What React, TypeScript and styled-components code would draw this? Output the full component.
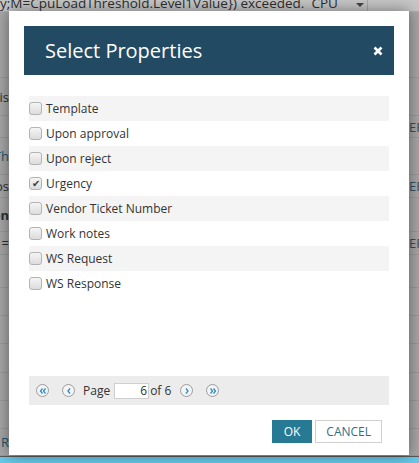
import React from "react";
import styled, { createGlobalStyle } from "styled-components";

const GlobalStyle = createGlobalStyle`
    html, body {
        margin: 0;
        padding: 0;
        background: #a7a7a7;
    }
    body {
        font-family: "Open Sans", "Liberation Sans", sans-serif;
    }
`;

const properties = [
    { label: "Template", checked: false },
    { label: "Upon approval", checked: false },
    { label: "Upon reject", checked: false },
    { label: "Urgency", checked: true },
    { label: "Vendor Ticket Number", checked: false },
    { label: "Work notes", checked: false },
    { label: "WS Request", checked: false },
    { label: "WS Response", checked: false },
];

const topLine = "y;M=CpuLoadThreshold.Level1Value}) exceeded.  CPU";

// rows of the dimmed page behind the dialog
const backRows: { h: number; left?: string; right?: string; tone?: "teal" | "bold" }[] = [
    { h: 66 },
    { h: 38, left: "nis" },
    { h: 22, right: "EF" },
    { h: 37, left: "Th", tone: "teal" },
    { h: 23, left: "os", right: "EF" },
    { h: 34, left: "on", tone: "bold" },
    { h: 23, left: "=", right: "EF" },
    { h: 33 },
    { h: 28 },
    { h: 28 },
    { h: 29 },
    { h: 28 },
    { h: 28 },
    { h: 27, left: "R", tone: "teal" },
];

const Stage = styled.div`
    position: relative;
    width: 419px;
    height: 463px;
    overflow: hidden;
    display: flex;
    flex-direction: column;
    background: #a7a7a7;
`;

const TopBar = styled.div`
    height: 11px;
    flex-shrink: 0;
    display: flex;
    background: #c7c7c7;
    border-bottom: 1px solid #b0b0b0;
    overflow: hidden;
`;

const TopText = styled.div`
    flex: 1;
    font-size: 13.5px;
    line-height: 14px;
    margin-top: -4px;
    color: #2e2e2e;
    white-space: pre;
    overflow: hidden;
`;

const DropButton = styled.div`
    width: 15px;
    display: flex;
    justify-content: center;
    padding-top: 3px;
    border-right: 1px solid #a9a9a9;
    margin-right: 51px;
    &::after {
        content: "";
        border-left: 4px solid transparent;
        border-right: 4px solid transparent;
        border-top: 4px solid #444;
        height: 0;
    }
`;

const BackRow = styled.div<{ $h: number }>`
    height: ${(p) => p.$h}px;
    flex-shrink: 0;
    display: flex;
    justify-content: space-between;
    align-items: center;
    border-bottom: 1px solid #9a9a9a;
    box-sizing: border-box;
    font-size: 13px;
    color: #2f2f2f;
`;

const BackLeft = styled.span<{ $tone?: string }>`
    width: 9px;
    overflow: hidden;
    white-space: nowrap;
    direction: rtl;
    font-weight: ${(p) => (p.$tone === "bold" ? 700 : 400)};
    color: ${(p) => (p.$tone === "teal" ? "#1d566b" : "#2f2f2f")};
`;

const BackRight = styled.span`
    width: 10px;
    overflow: hidden;
    white-space: nowrap;
    color: #2a5566;
`;

const Footer = styled.div`
    margin-top: auto;
    height: 8px;
    background: #66c9e8;
    border-top: 1px solid #5a5a5a;
`;

const Modal = styled.div`
    position: absolute;
    top: 11px;
    left: 9px;
    width: 400px;
    height: 444px;
    box-sizing: border-box;
    padding: 15px;
    background: #fff;
    box-shadow: 0 0 14px rgba(0, 0, 0, 0.45);
    display: flex;
    flex-direction: column;
`;

const Header = styled.div`
    height: 49px;
    flex-shrink: 0;
    background: #234a63;
    display: flex;
    align-items: center;
    justify-content: space-between;
    padding: 0 11px 0 21px;
`;

const Title = styled.h2`
    margin: 0;
    font-size: 20px;
    font-weight: 400;
    color: #fff;
`;

const CloseButton = styled.button`
    border: 0;
    padding: 0;
    background: none;
    display: flex;
    cursor: pointer;
`;

const Body = styled.div`
    padding: 21px 5px 0;
    display: flex;
    flex-direction: column;
`;

const PropertyList = styled.div`
    height: 280px;
`;

const PropertyRow = styled.label<{ $shade: boolean }>`
    height: 25px;
    display: flex;
    align-items: center;
    background: ${(p) => (p.$shade ? "#f4f4f4" : "#fff")};
    font-size: 12px;
    color: #333;
`;

const CheckBox = styled.span<{ $checked: boolean }>`
    width: 11px;
    height: 11px;
    margin: -1px 4px 0 0;
    border: 1px solid #b3b3b3;
    border-radius: 3px;
    background: linear-gradient(#f5f5f5, #dcdcdc);
    display: flex;
    align-items: center;
    justify-content: center;
    font-size: 10px;
    line-height: 1;
    color: #3a3a3a;
`;

const Pager = styled.div`
    height: 29px;
    background: #ececec;
    display: flex;
    align-items: center;
    padding-left: 7px;
    font-size: 12px;
    color: #333;
`;

const PageCircle = styled.span<{ $gap: number }>`
    width: 11px;
    height: 11px;
    margin-left: ${(p) => p.$gap}px;
    border: 1px solid #9c9c9c;
    border-radius: 50%;
    background: #f4f4f4;
    display: flex;
    align-items: center;
    justify-content: center;
`;

const PageLabel = styled.span<{ $gap: number }>`
    margin-left: ${(p) => p.$gap}px;
`;

const PageInput = styled.input`
    width: 35px;
    height: 16px;
    box-sizing: border-box;
    margin-left: 4px;
    margin-right: 1px;
    padding: 0 1px 0 0;
    border: 1px solid #cfcfcf;
    background: #fff;
    font: inherit;
    font-size: 12px;
    color: #333;
    text-align: right;
    outline: none;
`;

const Actions = styled.div`
    margin-top: 15px;
    display: flex;
    justify-content: flex-end;
    gap: 3px;
    padding-right: 7px;
`;

const Button = styled.button<{ $primary?: boolean }>`
    height: 23px;
    padding: 0 ${(p) => (p.$primary ? 11 : 10)}px;
    border: 1px solid ${(p) => (p.$primary ? "#277a93" : "#d0d0d0")};
    background: ${(p) => (p.$primary ? "#277a93" : "#fff")};
    color: ${(p) => (p.$primary ? "#fff" : "#2d6f88")};
    font-family: "Open Sans", "Liberation Sans", sans-serif;
    font-size: 12px;
    text-transform: uppercase;
    cursor: pointer;
`;

const Chevron = ({ dir, double }: { dir: "left" | "right"; double?: boolean }) => {
    const pts = (x: number) =>
        dir === "left" ? `${x + 2},1.5 ${x},4 ${x + 2},6.5` : `${x},1.5 ${x + 2},4 ${x},6.5`;
    return (
        <svg width="8" height="8" viewBox="0 0 8 8">
            {double ? (
                <>
                    <polyline points={pts(1.5)} fill="none" stroke="#2c8ec6" strokeWidth="1.3" />
                    <polyline points={pts(4.5)} fill="none" stroke="#2c8ec6" strokeWidth="1.3" />
                </>
            ) : (
                <polyline points={pts(3)} fill="none" stroke="#2c8ec6" strokeWidth="1.3" />
            )}
        </svg>
    );
};

const App = () => {
    return (
        <Stage>
            <GlobalStyle />
            <TopBar>
                <TopText>{topLine}</TopText>
                <DropButton />
            </TopBar>
            {backRows.map((r, i) => (
                <BackRow key={i} $h={r.h}>
                    <BackLeft $tone={r.tone}>{r.left}</BackLeft>
                    <BackRight>{r.right}</BackRight>
                </BackRow>
            ))}
            <Footer />

            <Modal>
                <Header>
                    <Title>Select Properties</Title>
                    <CloseButton aria-label="close">
                        <svg width="10" height="10" viewBox="0 0 10 10">
                            <path d="M1.5 1.5 L8.5 8.5 M8.5 1.5 L1.5 8.5" stroke="#fff" strokeWidth="2.6" />
                        </svg>
                    </CloseButton>
                </Header>
                <Body>
                    <PropertyList>
                        {properties.map((p, i) => (
                            <PropertyRow key={p.label} $shade={i % 2 === 0}>
                                <CheckBox $checked={p.checked}>{p.checked ? "✔" : ""}</CheckBox>
                                {p.label}
                            </PropertyRow>
                        ))}
                    </PropertyList>
                    <Pager>
                        <PageCircle $gap={0}>
                            <Chevron dir="left" double />
                        </PageCircle>
                        <PageCircle $gap={13}>
                            <Chevron dir="left" />
                        </PageCircle>
                        <PageLabel $gap={8}>Page</PageLabel>
                        <PageInput defaultValue="6" />
                        <span>of 6</span>
                        <PageCircle $gap={9}>
                            <Chevron dir="right" />
                        </PageCircle>
                        <PageCircle $gap={13}>
                            <Chevron dir="right" double />
                        </PageCircle>
                    </Pager>
                    <Actions>
                        <Button $primary>OK</Button>
                        <Button>Cancel</Button>
                    </Actions>
                </Body>
            </Modal>
        </Stage>
    );
};

export default App;
